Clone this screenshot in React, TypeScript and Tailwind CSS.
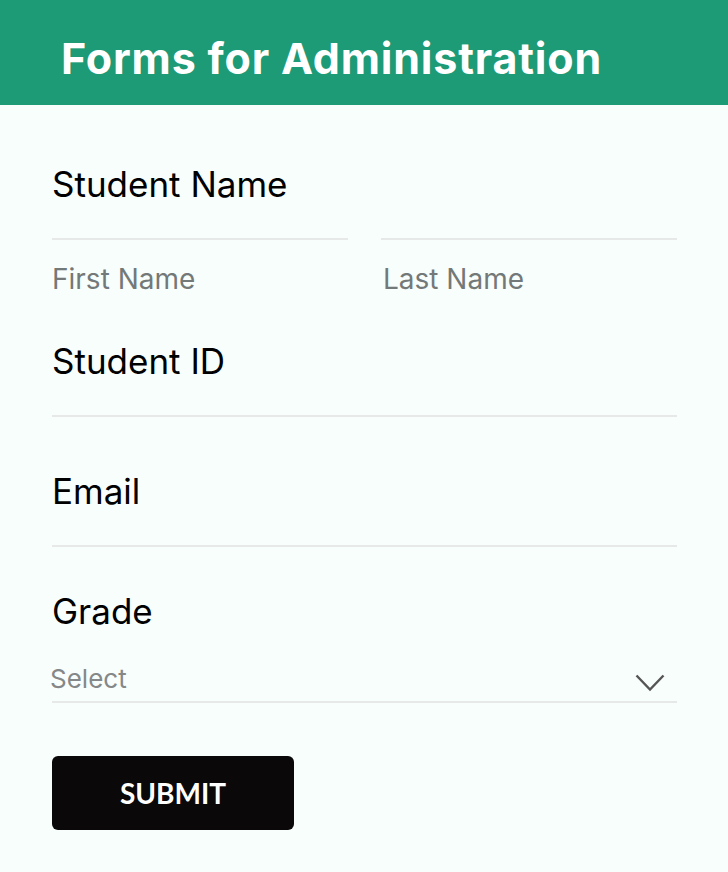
function Label({ children }: { children: React.ReactNode }) {
  return (
    <label className="block text-[35px] leading-[40px] text-black">
      {children}
    </label>
  );
}

function Line() {
  return <div className="h-[36px] border-b-2 border-[#e6e9e8]" />;
}

export default function App() {
  return (
    <div className="min-h-screen bg-[#f8fefc] font-['Inter',sans-serif]">
      {/* Header */}
      <header className="flex h-[105px] items-center bg-[#1d9a76] px-[61px] pt-[11px]">
        <h1 className="text-[43px] font-bold tracking-[0.8px] text-white">
          Forms for Administration
        </h1>
      </header>

      <form className="pl-[52px] pr-[51px] pt-[59px]">
        {/* Student name */}
        <Label>Student Name</Label>
        <div className="grid grid-cols-2 gap-[33px]">
          <div>
            <Line />
            <p className="mt-[23px] text-[28px] leading-[32px] text-[#737979]">First Name</p>
          </div>
          <div>
            <Line />
            <p className="ml-[2px] mt-[23px] text-[28px] leading-[32px] text-[#737979]">Last Name</p>
          </div>
        </div>

        {/* Student ID */}
        <div className="mt-[46px]">
          <Label>Student ID</Label>
          <Line />
        </div>

        {/* Email */}
        <div className="mt-[54px]">
          <Label>Email</Label>
          <Line />
        </div>

        {/* Grade */}
        <div className="mt-[44px]">
          <Label>Grade</Label>
          <div className="flex items-start justify-between border-b-2 border-[#e6e9e8] pb-[6px] pt-[32px]">
            <span className="-ml-[2px] text-[26px] leading-[32px] text-[#858888]">Select</span>
            <svg width="30" height="18" viewBox="0 0 30 18" className="mr-[12px] mt-[11px]">
              <polyline
                points="1.5,1.5 15,15.5 28.5,1.5"
                fill="none"
                stroke="#555"
                strokeWidth="2.4"
              />
            </svg>
          </div>
        </div>

        <button
          type="button"
          className="mt-[53px] flex h-[74px] w-[242px] items-center justify-center rounded-[6px] bg-[#0a0808] font-['Lato',sans-serif] text-[28px] font-bold text-white"
        >
          SUBMIT
        </button>
      </form>
    </div>
  );
}
